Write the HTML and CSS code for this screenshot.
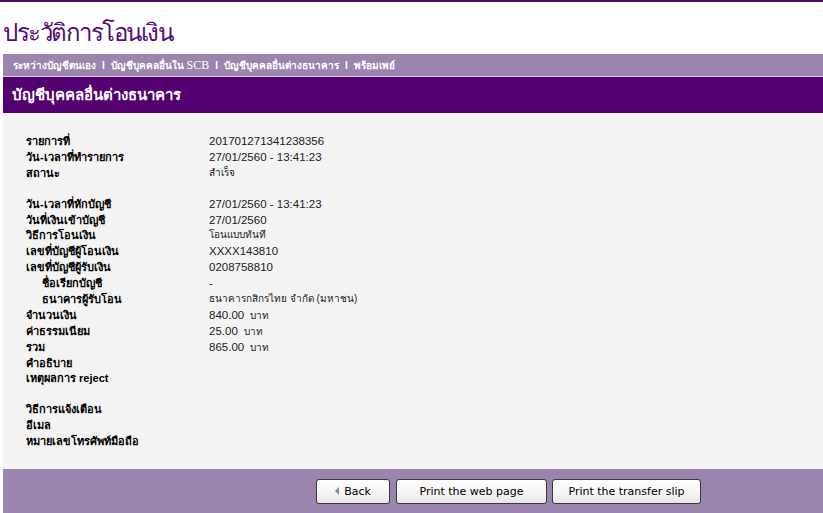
FILE: index.html
```html
<!DOCTYPE html>
<html lang="th">
<head>
<meta charset="utf-8">
<title>ประวัติการโอนเงิน</title>
<link rel="stylesheet" href="styles.css">
</head>
<body>
<div class="topline"></div>
<div class="title">ประวัติการโอนเงิน</div>
<div class="page">
  <div class="nav">
    <span class="nav-item">ระหว่างบัญชีตนเอง</span><span class="sep">I</span>
    <span class="nav-item">บัญชีบุคคลอื่นใน <span class="serif">SCB</span></span><span class="sep">I</span>
    <span class="nav-item">บัญชีบุคคลอื่นต่างธนาคาร</span><span class="sep">I</span>
    <span class="nav-item">พร้อมเพย์</span>
  </div>
  <div class="section-head">บัญชีบุคคลอื่นต่างธนาคาร</div>
  <div class="content">
    <div class="row"><div class="label">รายการที่</div><div class="value">201701271341238356</div></div>
    <div class="row"><div class="label">วัน-เวลาที่ทำรายการ</div><div class="value">27/01/2560 - 13:41:23</div></div>
    <div class="row"><div class="label">สถานะ</div><div class="value small">สำเร็จ</div></div>
    <div class="gap"></div>
    <div class="row"><div class="label">วัน-เวลาที่หักบัญชี</div><div class="value">27/01/2560 - 13:41:23</div></div>
    <div class="row"><div class="label">วันที่เงินเข้าบัญชี</div><div class="value">27/01/2560</div></div>
    <div class="row"><div class="label">วิธีการโอนเงิน</div><div class="value small">โอนแบบทันที</div></div>
    <div class="row"><div class="label">เลขที่บัญชีผู้โอนเงิน</div><div class="value">XXXX143810</div></div>
    <div class="row"><div class="label">เลขที่บัญชีผู้รับเงิน</div><div class="value">0208758810</div></div>
    <div class="row"><div class="label indent">ชื่อเรียกบัญชี</div><div class="value">-</div></div>
    <div class="row"><div class="label indent">ธนาคารผู้รับโอน</div><div class="value small">ธนาคารกสิกรไทย จำกัด (มหาชน)</div></div>
    <div class="row"><div class="label">จำนวนเงิน</div><div class="value">840.00 <span class="unit">บาท</span></div></div>
    <div class="row"><div class="label">ค่าธรรมเนียม</div><div class="value">25.00 <span class="unit">บาท</span></div></div>
    <div class="row"><div class="label">รวม</div><div class="value">865.00 <span class="unit">บาท</span></div></div>
    <div class="row"><div class="label">คำอธิบาย</div><div class="value"></div></div>
    <div class="row"><div class="label">เหตุผลการ reject</div><div class="value"></div></div>
    <div class="gap"></div>
    <div class="row"><div class="label">วิธีการแจ้งเตือน</div><div class="value"></div></div>
    <div class="row"><div class="label">อีเมล</div><div class="value"></div></div>
    <div class="row"><div class="label">หมายเลขโทรศัพท์มือถือ</div><div class="value"></div></div>
  </div>
  <div class="footer">
    <button class="btn btn-back"><span class="tri"></span>Back</button>
    <button class="btn btn-web">Print the web page</button>
    <button class="btn btn-slip">Print the transfer slip</button>
  </div>
</div>
</body>
</html>
```
FILE: styles.css
```css
html, body {
  margin: 0;
  padding: 0;
  background: #ffffff;
  font-family: "Liberation Sans", Arial, "Noto Sans", sans-serif;
}
.topline {
  height: 2px;
  background: #4e0b68;
}
.title {
  height: 52px;
  box-sizing: border-box;
  padding: 14px 0 0 3px;
  font-size: 24px;
  line-height: 34px;
  color: #540a74;
  letter-spacing: -1.5px;
}
.page {
  margin-left: 3px;
}
.nav {
  height: 23px;
  box-sizing: border-box;
  background: #9b84ae;
  border-bottom: 1px solid #ddd2e4;
  padding-left: 10px;
  display: flex;
  align-items: center;
  color: #ffffff;
  font-weight: bold;
  font-size: 10px;
  white-space: nowrap;
}
.nav-item {
  display: inline-block;
}
.serif {
  font-family: "Liberation Serif", "Times New Roman", serif;
  font-weight: normal;
  font-size: 12px;
}
.sep {
  margin: 0 6px;
  font-size: 10px;
}
.section-head {
  height: 36px;
  box-sizing: border-box;
  background: #540070;
  color: #ffffff;
  font-weight: bold;
  font-size: 15px;
  padding-left: 9px;
  display: flex;
  align-items: center;
}
.content {
  background: #f3f3f3;
  height: 356px;
  box-sizing: border-box;
  padding: 20px 0 0 23px;
}
.row {
  display: flex;
  height: 15.9px;
  line-height: 16px;
  white-space: nowrap;
}
.gap {
  height: 15px;
}
.label {
  width: 183px;
  font-weight: bold;
  font-size: 11px;
  color: #000000;
}
.label.indent {
  padding-left: 16px;
  width: 167px;
}
.value {
  font-size: 11.5px;
  color: #222222;
}
.value.small {
  font-size: 10px;
}
.unit {
  font-size: 10px;
  margin-left: 3px;
}
.footer {
  height: 44px;
  box-sizing: border-box;
  background: #9b84ae;
  padding: 10px 0 0 313px;
  display: flex;
  align-items: flex-start;
}
.btn {
  height: 25px;
  box-sizing: border-box;
  border: 1px solid #3a3a3a;
  border-radius: 3px;
  background: linear-gradient(#ffffff, #f4f4f4 60%, #e6e6e6);
  font-family: "DejaVu Sans", Verdana, sans-serif;
  font-size: 11px;
  color: #000000;
  padding: 0;
  margin-right: 5px;
  display: flex;
  align-items: center;
  justify-content: center;
}
.btn-back {
  width: 74px;
  margin-right: 6px;
}
.btn-web {
  width: 151px;
}
.btn-slip {
  width: 149px;
}
.tri {
  width: 0;
  height: 0;
  border-top: 4px solid transparent;
  border-bottom: 4px solid transparent;
  border-right: 4px solid #8a8a8a;
  margin-right: 5px;
  margin-top: -2px;
}
```
